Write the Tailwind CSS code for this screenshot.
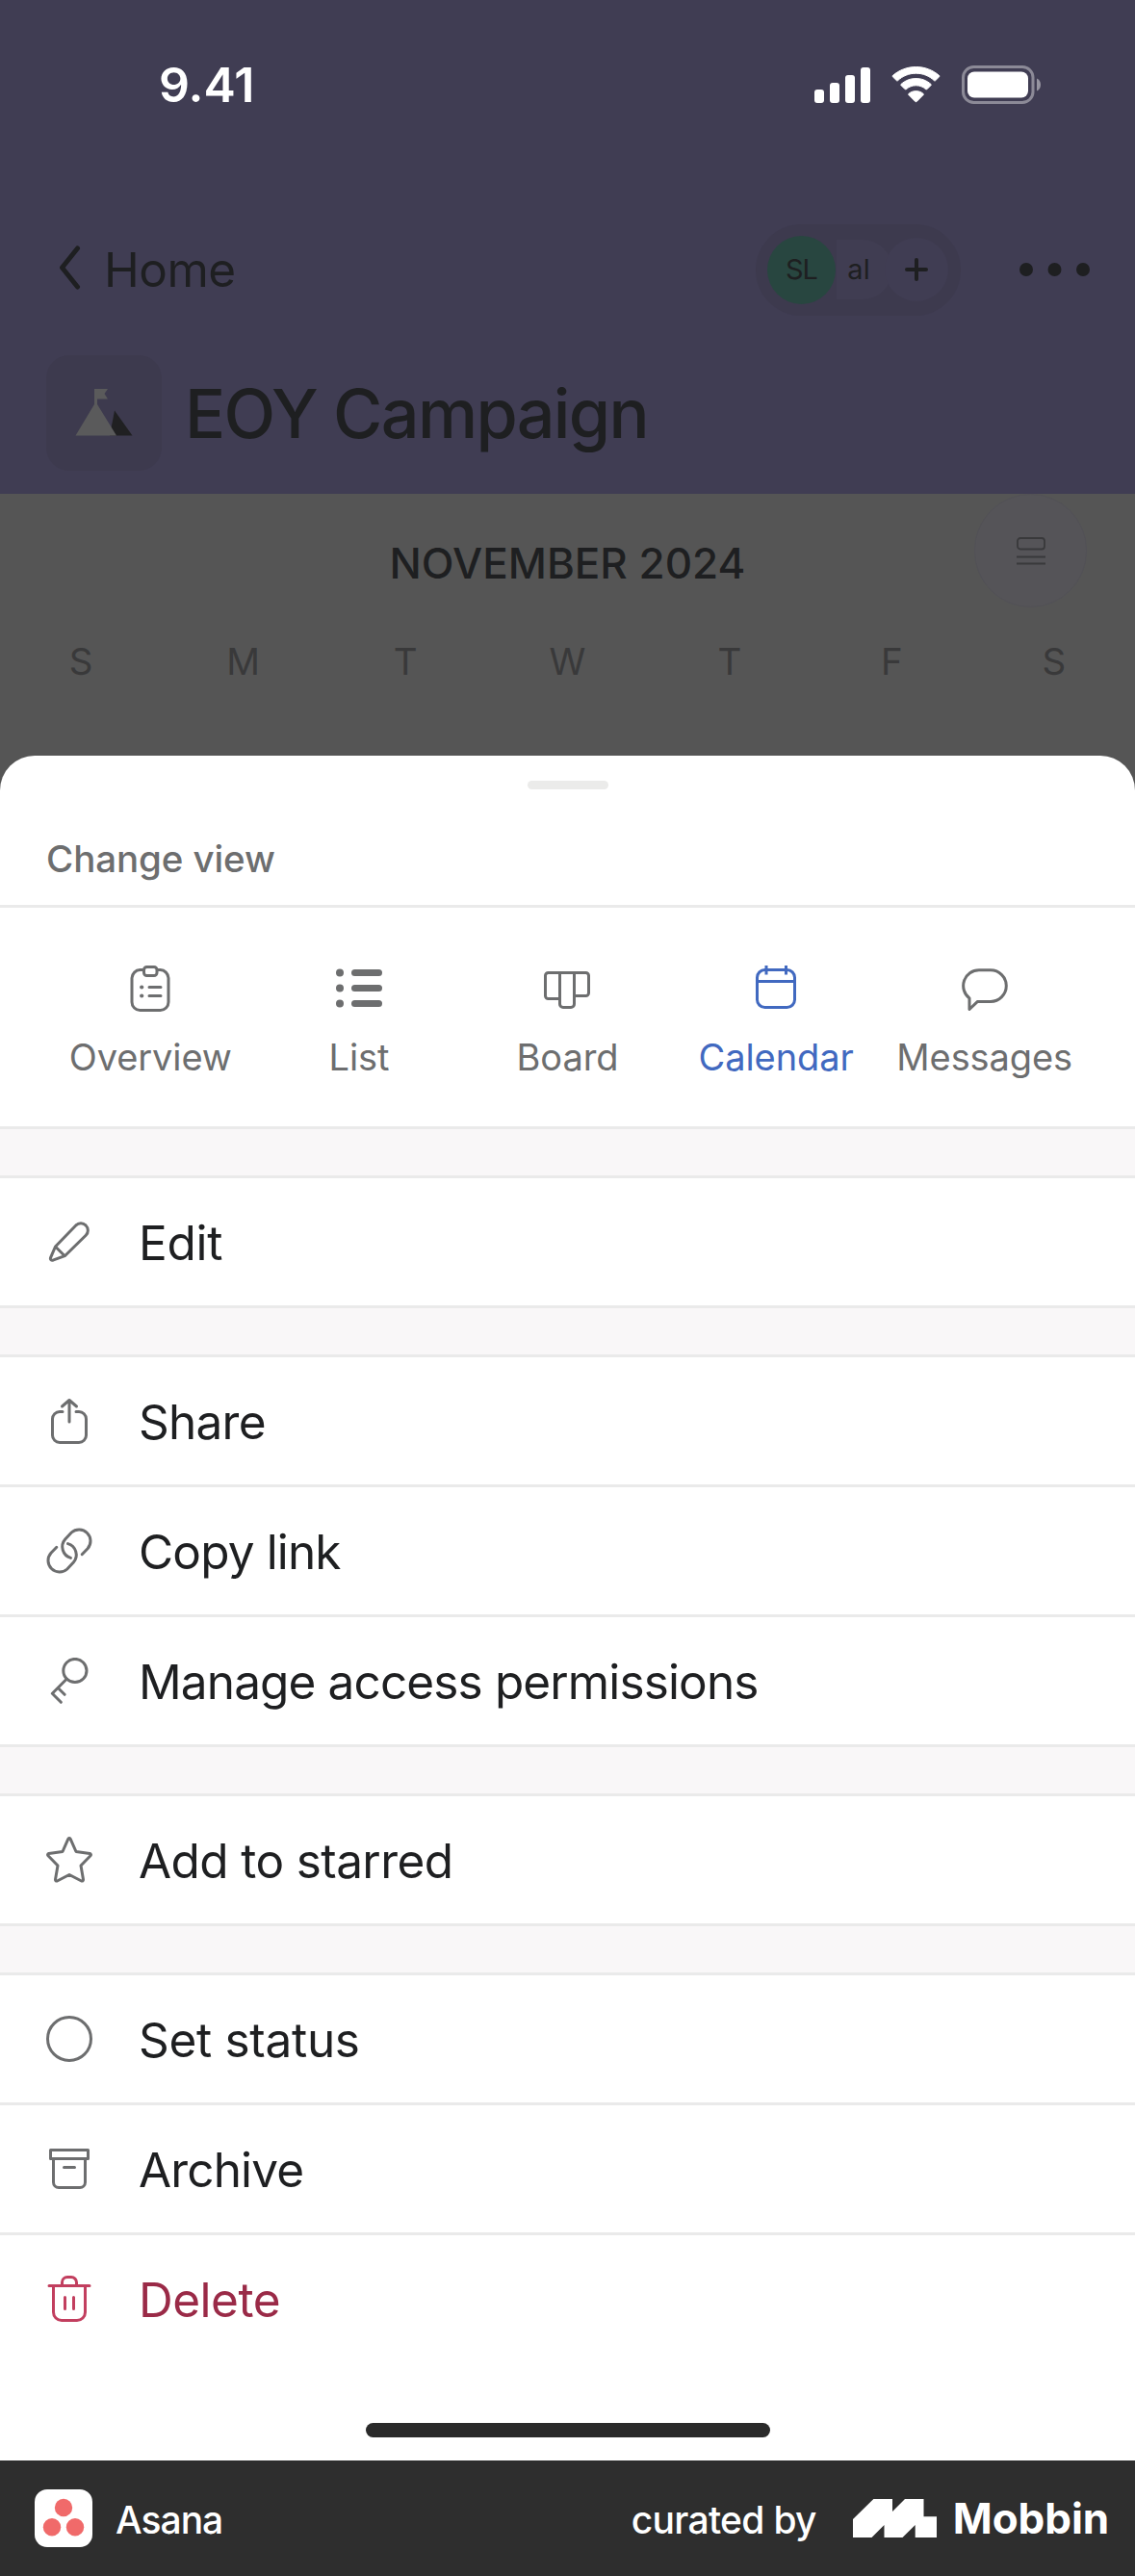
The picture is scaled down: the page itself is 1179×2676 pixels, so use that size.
<!DOCTYPE html>
<html lang="en">
<head>
  <meta charset="UTF-8" />
  <meta name="viewport" content="width=device-width, initial-scale=1" />
  <title>EOY Campaign - Asana</title>
  <script src="https://cdn.jsdelivr.net/npm/@tailwindcss/browser@4"></script>
</head>
<body class="bg-[#555555] font-['Inter',sans-serif] w-[1179px] h-[2676px] flex flex-col overflow-hidden text-[#1e1f21]">

  <!-- HEADER -->
  <header class="h-[513px] shrink-0 bg-[#403d53]">
    <div class="h-44 flex items-center justify-between pl-[165px] pr-[97px] text-white">
      <span class="text-[50px] leading-none font-semibold">9.41</span>
      <div class="flex items-center">
        <svg class="w-[58px] h-[37px]" viewBox="0 0 58 37" fill="currentColor">
          <rect x="0" y="23" width="10" height="14" rx="3"/><rect x="16" y="16" width="10" height="21" rx="3"/>
          <rect x="32" y="8" width="10" height="29" rx="3"/><rect x="48" y="0" width="10" height="37" rx="3"/>
        </svg>
        <svg class="w-[51px] h-[38px] ml-[22px]" viewBox="0 0 51 38" fill="currentColor" stroke="currentColor" stroke-linejoin="round">
          <path d="M25.5 7.2c7.2 0 13.9 2.7 19 7.6l1 0 4.3-4.2 0-.9C43.200 3.800 34.700.5 25.500.5S7.800 3.800 1.200 9.700l0 .9 4.300 4.200 1 0c5.100-4.900 11.800-7.600 19-7.600z"/>
          <path d="M25.500 19.800c3.900 0 7.500 1.400 10.300 4l1 0 4.300-4.300 0-.9c-4.200-3.900-9.700-6.100-15.600-6.100s-11.400 2.200-15.600 6.100l0 .9 4.300 4.300 1 0c2.800-2.600 6.400-4 10.300-4z"/>
          <path d="M33.200 28.500c-2.100-1.900-4.800-2.900-7.700-2.900s-5.600 1-7.700 2.900l0 .9 7.200 7.300 1 0 7.200-7.300z"/>
        </svg>
        <svg class="w-[83px] h-[40px] ml-[22px]" viewBox="0 0 83 40" fill="none">
          <rect x="1.500" y="1.500" width="72.500" height="37" rx="11" stroke="white" stroke-opacity=".4" stroke-width="3"/>
          <rect x="6" y="6.500" width="63" height="27" rx="7" fill="white"/>
          <path d="M78 13.500c2.500 1 4 3.500 4 6.500s-1.500 5.500-4 6.500z" fill="white" fill-opacity=".45"/>
        </svg>
      </div>
    </div>

    <div class="mt-14 h-24 flex items-center pl-[60px] pr-[47px]">
      <svg class="w-6 h-[46px] -mt-1" viewBox="0 0 24 46" fill="none" stroke="currentColor" stroke-width="5" stroke-linecap="round" stroke-linejoin="round"><path d="M20.500 3 4.500 23l16 20"/></svg>
      <span class="ml-6 mt-0.5 text-[49.500px] leading-none tracking-[-.5px]">Home</span>
      <div class="ml-auto flex items-center h-[95px] w-[213px] rounded-full bg-[#3d3a4e] pl-3 text-[29px]">
        <span class="w-[71px] h-[71px] rounded-full bg-[#284640] flex items-center justify-center tracking-[-1px]">SL</span>
        <span class="w-[58px] h-[62px] rounded-r-full bg-[#403d52] flex items-center justify-center ml-px pr-4 pl-1">al</span>
        <span class="w-[66px] h-[66px] -ml-2 rounded-full bg-[#403d53] flex items-center justify-center">
          <svg class="w-6 h-6" viewBox="0 0 24 24" stroke="currentColor" stroke-width="4" stroke-linecap="round"><path d="M12 2v20M2 12h20"/></svg>
        </span>
      </div>
      <svg class="w-[73px] h-[14px] ml-[61px]" viewBox="0 0 73 14" fill="currentColor"><circle cx="7" cy="7" r="7"/><circle cx="36.500" cy="7" r="7"/><circle cx="66" cy="7" r="7"/></svg>
    </div>

    <div class="mt-[41px] h-[120px] flex items-center pl-12">
      <div class="w-[120px] h-[120px] rounded-3xl bg-[#3d3a4e]">
        <svg class="w-[120px] h-[120px]" viewBox="0 0 120 120">
          <path d="M71 57.500 89.500 83.500H66z" fill="#202022"/>
          <path d="M50 35h14l-3.500 5 3.500 5.500H53V51l20 32.500H30.500L50 51z" fill="#5a5a5b"/>
        </svg>
      </div>
      <h1 class="ml-6 mt-0.5 text-[70px] leading-none font-medium tracking-[-1.650px]">EOY Campaign</h1>
    </div>
  </header>

  <!-- CALENDAR -->
  <section class="relative h-[272px] shrink-0">
    <h2 class="pt-[50px] text-center text-[44px] leading-[44px] font-medium">NOVEMBER 2024</h2>
    <div class="mt-[60px] grid grid-cols-7 text-center text-[38.500px] leading-[40px] text-[#39393a]">
      <span>S</span><span>M</span><span>T</span><span>W</span><span>T</span><span>F</span><span>S</span>
    </div>
    <div class="absolute top-0 right-[50px] w-[117px] h-[118px] rounded-full bg-[#555458] border border-[#525156] flex items-center justify-center">
      <svg class="w-[30px] h-[30px]" viewBox="0 0 30 30" fill="none" stroke="#39393b" stroke-width="1.800"><rect x="1" y="2" width="28" height="11.500" rx="3"/><path d="M0 21.500h30M0 28.500h30"/></svg>
    </div>
  </section>

  <!-- BOTTOM SHEET -->
  <main class="h-[1771px] shrink-0 bg-white rounded-t-[36px] flex flex-col">
    <div class="h-[158px] shrink-0 border-b-3 border-[#eaeaea] pt-[26px]">
      <div class="w-[84px] h-[9px] rounded-full bg-[#ebebea] mx-auto"></div>
      <p class="mt-[52px] pl-12 text-[38.500px] leading-[40px] font-medium tracking-[-.1px] text-[#6d6e6f]">Change view</p>
    </div>

    <nav class="h-[230px] shrink-0 border-b-3 border-[#eaeaea] px-12 pt-[60px] grid grid-cols-5 text-[38px] leading-[44px] tracking-[-.1px] text-[#6d6e6f] whitespace-nowrap">
      <div class="flex flex-col items-center gap-[25px]">
        <svg class="w-12 h-12" viewBox="0 0 48 48" fill="none" stroke="currentColor" stroke-width="3" stroke-linecap="round">
          <path d="M16 4.500h-2.500a9 9 0 0 0-8.500 8.500v25a8.500 8.500 0 0 0 8.500 8.500h21A8.500 8.500 0 0 0 43 38V13a9 9 0 0 0-8.500-8.500H32"/>
          <rect x="17.500" y="1.500" width="13.500" height="9" rx="3"/><path d="M23 22.500h12M23 31.500h12"/>
          <circle cx="15.200" cy="22.500" r="2.100" fill="currentColor" stroke="none"/><circle cx="15.200" cy="31.500" r="2.100" fill="currentColor" stroke="none"/>
        </svg>
        <span>Overview</span>
      </div>
      <div class="flex flex-col items-center gap-[25px]">
        <svg class="w-12 h-12" viewBox="0 0 48 48" fill="currentColor">
          <circle cx="4" cy="7.500" r="4"/><circle cx="4" cy="23.500" r="4"/><circle cx="4" cy="39.500" r="4"/>
          <rect x="16" y="4" width="32" height="7" rx="3.500"/><rect x="16" y="20" width="32" height="7" rx="3.500"/><rect x="16" y="36" width="32" height="7" rx="3.500"/>
        </svg>
        <span>List</span>
      </div>
      <div class="flex flex-col items-center gap-[25px]">
        <svg class="w-12 h-12" viewBox="0 0 48 48" fill="none" stroke="currentColor" stroke-width="3">
          <path d="M16.500 34.500h-12a3 3 0 0 1-3-3v-21a3 3 0 0 1 3-3h39a3 3 0 0 1 3 3v18a3 3 0 0 1-3 3h-12"/>
          <path d="M16.500 7.500V40a3.500 3.500 0 0 0 3.500 3.500h8a3.500 3.500 0 0 0 3.500-3.500V7.500"/>
        </svg>
        <span>Board</span>
      </div>
      <div class="flex flex-col items-center gap-[25px] text-[#4169c0]">
        <svg class="w-12 h-12" viewBox="0 0 48 48" fill="none" stroke="currentColor" stroke-width="3">
          <rect x="4.500" y="4.500" width="39" height="39" rx="8"/><path d="M4.500 16.500h39M14 0v9.500M34.500 0v9.500"/>
        </svg>
        <span>Calendar</span>
      </div>
      <div class="flex flex-col items-center gap-[25px]">
        <svg class="w-12 h-12" viewBox="0 0 48 48" fill="none" stroke="currentColor" stroke-width="3" stroke-linejoin="round">
          <path d="M18 4.800h12a16.300 16.300 0 0 1 0 32.600H16.500L8 45.500V34A16.300 16.300 0 0 1 18 4.800z"/>
        </svg>
        <span>Messages</span>
      </div>
    </nav>

    <div class="h-[51px] shrink-0 bg-[#f9f7f8] border-b-3 border-[#eaeaea]"></div>

    <div class="h-[135px] shrink-0 border-b-3 border-[#eaeaea] flex items-center gap-12 pl-12">
      <svg class="w-12 h-12 text-[#6d6e6f]" viewBox="0 0 48 48" fill="none" stroke="currentColor" stroke-width="3" stroke-linejoin="round"><path d="M9.500 29 30.800 7a7.300 7.300 0 0 1 10.400 10.300L19.300 38.700 7 43.200c-1.700.4-3-.7-2.500-2.500zM9.500 29l9.800 9.700"/></svg>
      <span class="text-[49.500px] leading-none tracking-[-.3px] mt-[3px]">Edit</span>
    </div>

    <div class="h-[51px] shrink-0 bg-[#f9f7f8] border-b-3 border-[#eaeaea]"></div>

    <div class="h-[135px] shrink-0 border-b-3 border-[#eaeaea] flex items-center gap-12 pl-12">
      <svg class="w-12 h-12 text-[#6d6e6f]" viewBox="0 0 48 48" fill="none" stroke="currentColor" stroke-width="3" stroke-linecap="round" stroke-linejoin="round"><path d="M17 14.500h-3a7.500 7.500 0 0 0-7.500 7.500v17a7.500 7.500 0 0 0 7.500 7.500h20a7.500 7.500 0 0 0 7.500-7.500V22a7.500 7.500 0 0 0-7.500-7.500h-3M24 25V3M16.500 9 24 2.500 31.500 9"/></svg>
      <span class="text-[49.500px] leading-none tracking-[-.75px] mt-[3px]">Share</span>
    </div>
    <div class="h-[135px] shrink-0 border-b-3 border-[#eaeaea] flex items-center gap-12 pl-12">
      <svg class="w-12 h-12 text-[#6d6e6f]" viewBox="0 0 48 48" fill="none" stroke="currentColor" stroke-width="3" stroke-linecap="round"><path d="M37.200 27.700 43 21.800A11.900 11.900 0 0 0 26.200 5L19.700 12A12 12 0 0 0 25.500 31.400"/><path d="M10.800 20.300 5 26.200A11.900 11.900 0 0 0 21.800 43L28.300 36A12 12 0 0 0 22.500 16.600"/></svg>
      <span class="text-[49.500px] leading-none tracking-[-.85px] mt-[3px]">Copy link</span>
    </div>
    <div class="h-[135px] shrink-0 border-b-3 border-[#eaeaea] flex items-center gap-12 pl-12">
      <svg class="w-12 h-12 text-[#6d6e6f]" viewBox="0 0 48 48" fill="none" stroke="currentColor" stroke-width="3" stroke-linecap="round" stroke-linejoin="round"><circle cx="29.900" cy="13.500" r="12.100"/><path d="M21.400 22 6.300 37.300l9 9M12.300 31.500l6.800 6.800"/></svg>
      <span class="text-[49.500px] leading-none tracking-[-.87px] mt-[3px]">Manage access permissions</span>
    </div>

    <div class="h-[51px] shrink-0 bg-[#f9f7f8] border-b-3 border-[#eaeaea]"></div>

    <div class="h-[135px] shrink-0 border-b-3 border-[#eaeaea] flex items-center gap-12 pl-12">
      <svg class="w-12 h-12 text-[#6d6e6f]" viewBox="0 0 48 48" fill="none" stroke="currentColor" stroke-width="3" stroke-linejoin="round"><path d="M22.800 2.400q1.200-1.600 2.400 0L31 15.500l14.300 2q1.800.6.700 2.200L36 30l2.500 14.500q0 2-1.900 1.500L24 39.500 11.400 46q-1.900.5-1.900-1.500L12 30 2 19.700q-1.100-1.600.7-2.200L17 15.500z"/></svg>
      <span class="text-[49.500px] leading-none tracking-[-.6px] mt-[3px]">Add to starred</span>
    </div>

    <div class="h-[51px] shrink-0 bg-[#f9f7f8] border-b-3 border-[#eaeaea]"></div>

    <div class="h-[135px] shrink-0 border-b-3 border-[#eaeaea] flex items-center gap-12 pl-12">
      <svg class="w-12 h-12 text-[#6d6e6f]" viewBox="0 0 48 48" fill="none" stroke="currentColor" stroke-width="3"><circle cx="24" cy="24" r="22.500"/></svg>
      <span class="text-[49.500px] leading-none tracking-[-.3px] mt-[3px]">Set status</span>
    </div>
    <div class="h-[135px] shrink-0 border-b-3 border-[#eaeaea] flex items-center gap-12 pl-12">
      <svg class="w-12 h-12 text-[#6d6e6f]" viewBox="0 0 48 48" fill="none" stroke="currentColor" stroke-width="3" stroke-linecap="round" stroke-linejoin="round"><path d="M4.500 4.500h39v9h-39zM7.500 13.500V38a5.500 5.500 0 0 0 5.500 5.500h22a5.500 5.500 0 0 0 5.500-5.500V13.500M18.500 22.500h11"/></svg>
      <span class="text-[49.500px] leading-none tracking-[-.85px] mt-[3px]">Archive</span>
    </div>
    <div class="h-[132px] shrink-0 flex items-center gap-12 pl-12">
      <svg class="w-12 h-12 text-[#c23f5f]" viewBox="0 0 48 48" fill="none" stroke="currentColor" stroke-width="3" stroke-linecap="round"><path d="M3 10.500h42M16.500 10V7a5.500 5.500 0 0 1 5.500-5.500h4A5.500 5.500 0 0 1 31.500 7v3M7.500 10.500V38a8.500 8.500 0 0 0 8.500 8.500h16a8.500 8.500 0 0 0 8.500-8.500V10.500M19.500 22.500v12M28.500 22.500v12"/></svg>
      <span class="text-[49.500px] leading-none tracking-[-.5px] mt-[3px] text-[#9a2a47]">Delete</span>
    </div>

    <div class="w-[420px] h-[15px] rounded-full bg-[#2a2a2a] mx-auto mt-[63px]"></div>
  </main>

  <!-- FOOTER -->
  <footer class="h-[120px] shrink-0 bg-[#2e2e2e] text-white flex items-center pl-9 pr-[27px]">
    <svg class="w-[60px] h-[60px]" viewBox="0 0 60 60"><rect width="60" height="60" rx="13" fill="white"/><g fill="#f06a6a"><circle cx="30" cy="19" r="9.200"/><circle cx="18" cy="39.300" r="9.200"/><circle cx="42" cy="39.300" r="9.200"/></g></svg>
    <span class="ml-6 mt-0.5 text-[39px] leading-none font-medium tracking-[-1px]">Asana</span>
    <span class="ml-auto mt-0.5 text-[39px] leading-none font-medium tracking-[-.7px]">curated by</span>
    <svg class="w-[87px] h-10 ml-[38px]" viewBox="0 0 87 40" fill="currentColor"><path d="M0 21 21.400 0H41v13L54 0h19.500v18.300H87V40H64.700V27L51.500 40h-19V27L19.500 40H0z"/></svg>
    <span class="ml-[17px] text-[44px] leading-none font-bold tracking-[-.1px]">Mobbin</span>
  </footer>

</body>
</html>
